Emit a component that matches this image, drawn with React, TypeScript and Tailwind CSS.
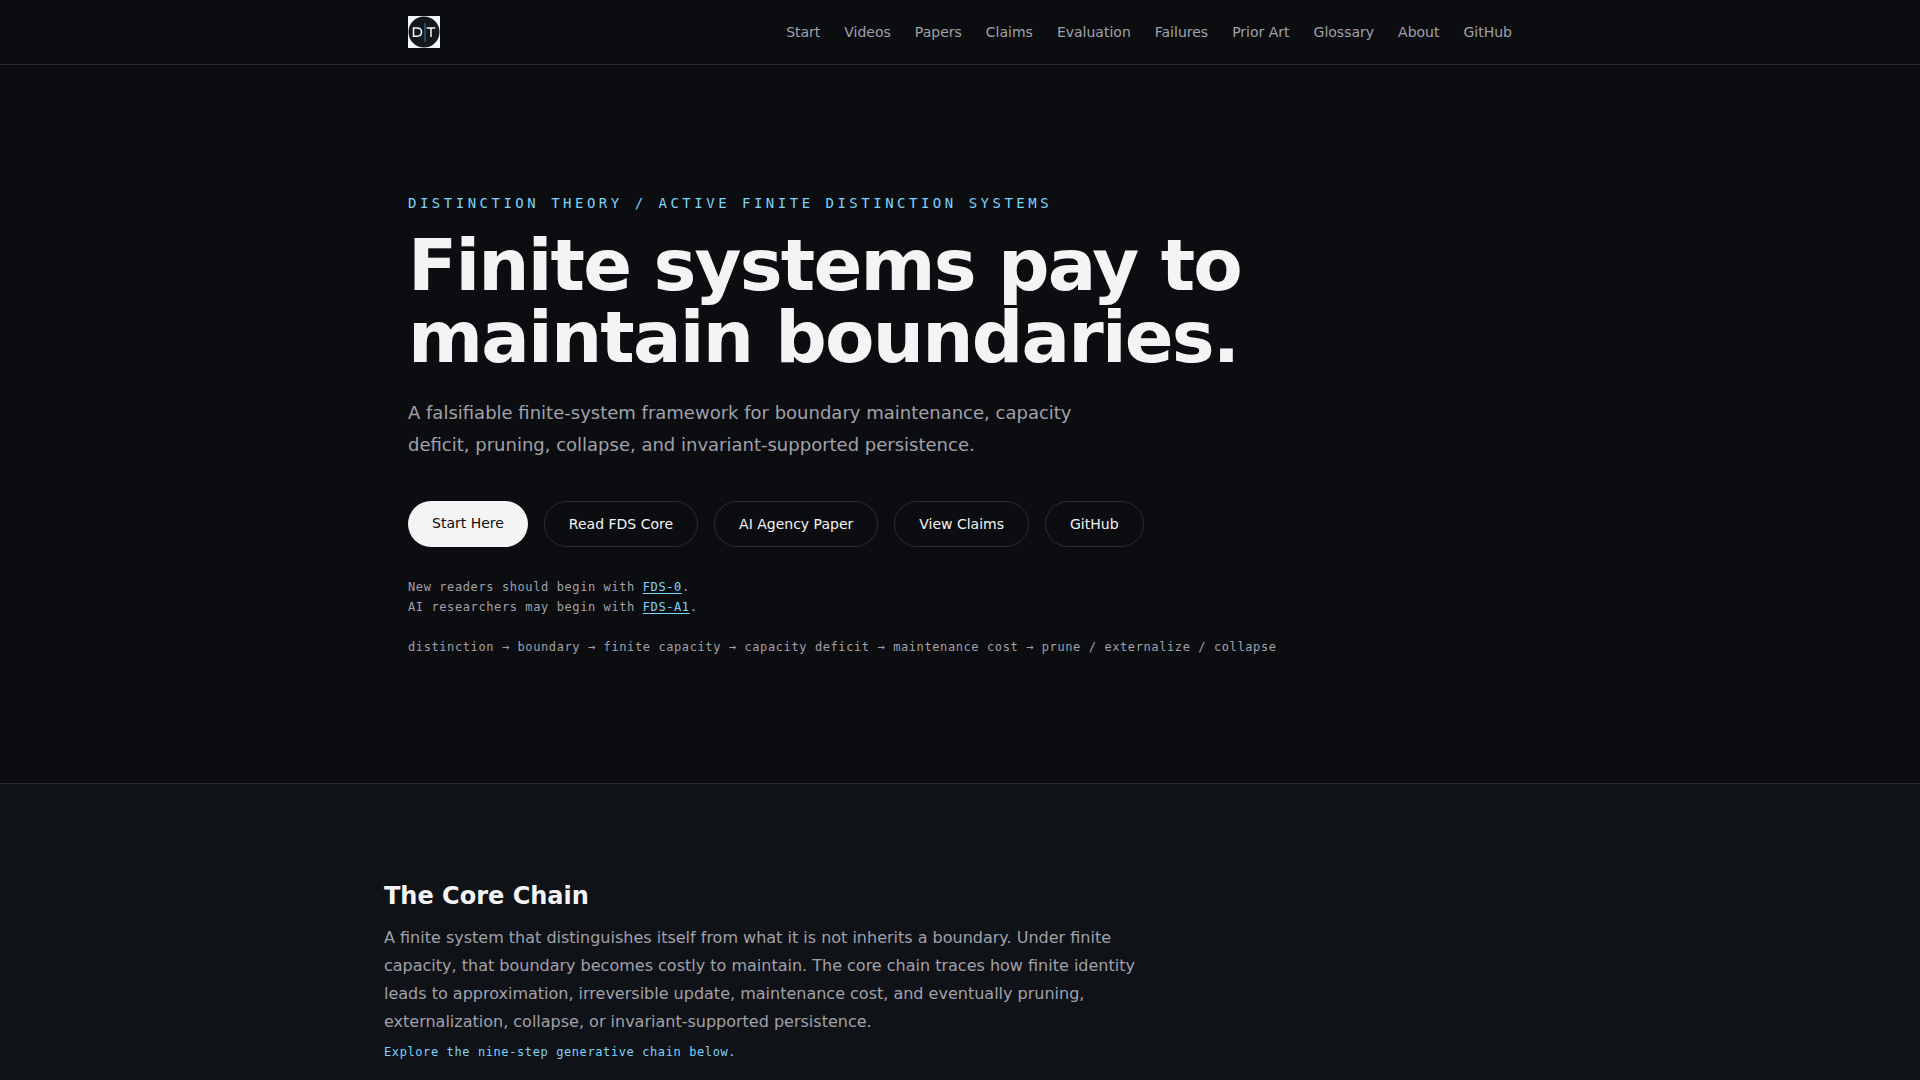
import React from 'react';

const NAV_LINKS = ['Start', 'Videos', 'Papers', 'Claims', 'Evaluation', 'Failures', 'Prior Art', 'Glossary', 'About', 'GitHub'];

const ACTIONS = ['Read FDS Core', 'AI Agency Paper', 'View Claims', 'GitHub'];

const Logo: React.FC = () => (
  <svg viewBox="0 0 32 32" className="h-8 w-8" aria-hidden="true">
    <rect width="32" height="32" fill="#f4f7fa" />
    <circle cx="16" cy="16" r="15.5" fill="#14171b" />
    <path d="M17 7v19" stroke="#1f6080" strokeWidth="1.500" />
    <path
      d="M5.500 12v8.200h3.500c6 0 6-8.200 0-8.200zM18.700 12h8.600M23 12v9"
      fill="none"
      stroke="#f4f7fa"
      strokeWidth="1.500"
    />
  </svg>
);

const Header: React.FC = () => (
  <header className="border-b border-[#2a2d35]">
    <div className="mx-auto flex h-16 max-w-[1152px] items-center justify-between px-6">
      <a href="#" aria-label="Home">
        <Logo />
      </a>
      <nav className="flex gap-6 text-sm text-[#a1a1aa]">
        {NAV_LINKS.map((label) => (
          <a key={label} href="#" className="hover:text-white">
            {label}
          </a>
        ))}
      </nav>
    </div>
  </header>
);

const Hero: React.FC = () => (
  <section className="border-b border-[#2a2d35]">
    <div className="mx-auto max-w-[1152px] px-6 py-32">
      <p className="font-['DejaVu_Sans_Mono',monospace] text-sm tracking-[0.25em] text-[#7dd3fc]">
        DISTINCTION THEORY / ACTIVE FINITE DISTINCTION SYSTEMS
      </p>
      <h1 className="mt-4 max-w-[896px] text-7xl leading-[72px] font-bold tracking-tight">
        Finite systems pay to maintain boundaries.
      </h1>
      <p className="mt-6 max-w-[672px] text-lg leading-8 text-[#a1a1aa]">
        A falsifiable finite-system framework for boundary maintenance, capacity deficit, pruning, collapse, and
        invariant-supported persistence.
      </p>
      <div className="mt-10 flex flex-wrap gap-4 text-sm">
        <a href="#start" className="rounded-full bg-[#f4f4f5] px-6 py-3 text-[#0b0d10]">
          Start Here
        </a>
        {ACTIONS.map((label) => (
          <a key={label} href="#" className="rounded-full border border-[#2a2d35] px-6 py-3">
            {label}
          </a>
        ))}
      </div>
      <div className="mt-8 space-y-1 font-['DejaVu_Sans_Mono',monospace] text-xs tracking-wider text-[#a1a1aa]">
        <p>
          New readers should begin with{' '}
          <a href="#" className="text-[#7dd3fc] underline underline-offset-2">FDS-0</a>.
        </p>
        <p>
          AI researchers may begin with{' '}
          <a href="#" className="text-[#7dd3fc] underline underline-offset-2">FDS-A1</a>.
        </p>
      </div>
      <p className="mt-6 font-['DejaVu_Sans_Mono',monospace] text-xs tracking-wider text-[#a1a1aa]">
        distinction → boundary → finite capacity → capacity deficit → maintenance cost → prune / externalize / collapse
      </p>
    </div>
  </section>
);

const CoreChain: React.FC = () => (
  <section className="bg-[#0f1217] py-24">
    <div className="mx-auto max-w-[1152px]">
      <h2 className="text-2xl leading-8 font-bold">The Core Chain</h2>
      <p className="mt-3 max-w-[768px] leading-7 text-[#a1a1aa]">
        A finite system that distinguishes itself from what it is not inherits a boundary. Under finite capacity, that
        boundary becomes costly to maintain. The core chain traces how finite identity leads to approximation,
        irreversible update, maintenance cost, and eventually pruning, externalization, collapse, or
        invariant-supported persistence.
      </p>
      <p className="mt-2 font-['DejaVu_Sans_Mono',monospace] text-xs tracking-wider text-[#7dd3fc]">
        Explore the nine-step generative chain below.
      </p>
    </div>
  </section>
);

export default function App() {
  return (
    <div className="min-h-screen bg-[#0b0d10] font-['DejaVu_Sans',sans-serif] text-[#f4f4f5]">
      <Header />
      <main>
        <Hero />
        <CoreChain />
      </main>
    </div>
  );
}
